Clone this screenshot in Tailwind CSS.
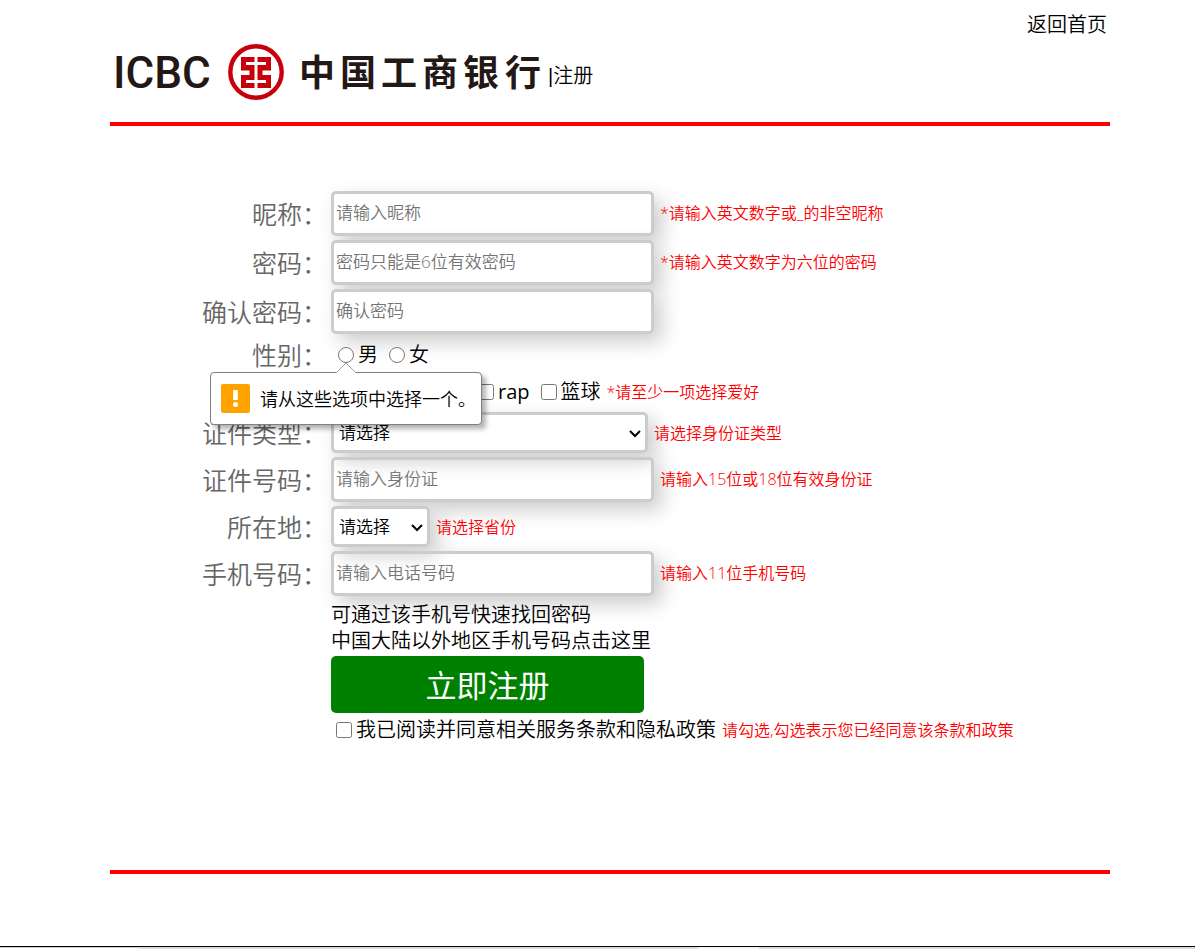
<!DOCTYPE html>
<html lang="zh-CN">
<head>
<meta charset="utf-8">
<meta name="viewport" content="width=device-width, initial-scale=1">
<title>注册</title>
<script src="https://cdn.jsdelivr.net/npm/@tailwindcss/browser@4"></script>
</head>
<body class="flex min-h-screen flex-col bg-white font-['Open_Sans','Noto_Sans_CJK_SC',sans-serif] text-xl leading-[26px] font-[350] text-black">
<div class="pr-[85px] pl-[110px]">
  <header class="border-b-4 border-[#ff0000] pb-5">
    <div class="flex justify-end pt-3 pr-[3px]"><a href="#">返回首页</a></div>
    <div class="flex items-center pt-[6px] pl-1">
      <svg class="h-[58px] w-[434px]" viewBox="0 0 434 58" role="img" aria-label="ICBC 中国工商银行">
        <text x="-1" y="44" font-family="Roboto" font-weight="500" font-size="44" fill="#231815">ICBC</text>
        <g transform="translate(114 0)">
          <circle cx="28" cy="28" r="25.700" fill="none" stroke="#c7000b" stroke-width="4.400"/>
          <path fill="#c7000b" d="M13 13h13.500v5H18v3h8.500v15H18v3h8.500v5H13V31h8.500v-4.500H13zM43 13H29.500v5H38v3h-8.500v15H38v3h-8.500v5H43V31h-8.500v-4.500H43z"/>
        </g>
        <text x="185 226 267 308 349 391" y="42" font-family="Noto Sans CJK SC" font-weight="700" font-size="36" fill="#231815">中国工商银行</text>
      </svg>
      <h1 class="pt-[6px] font-['Liberation_Sans','Noto_Sans_CJK_SC',sans-serif] font-[350]">|注册</h1>
    </div>
  </header>

  <main class="border-b-4 border-[#ff0000] pt-[65px] pb-[127px]">
    <form class="grid grid-cols-[217px_1fr] items-center gap-1">
      <label for="nick" class="text-right text-[25px] leading-8 text-[#666]">昵称：</label>
      <div class="flex items-center gap-[6px]">
        <input id="nick" type="text" placeholder="请输入昵称" class="h-[45px] w-[323px] rounded-[5px] border-[3px] border-[#ccc] bg-white px-[2px] pb-[2px] text-[17px] shadow-[8px_8px_20px_#ccc] placeholder:text-[#757575]">
        <span class="relative pb-[2px] text-base text-[#ff0000]">*请输入英文数字或_的非空昵称</span>
      </div>

      <label for="pwd" class="text-right text-[25px] leading-8 text-[#666]">密码：</label>
      <div class="flex items-center gap-[6px]">
        <input id="pwd" type="password" placeholder="密码只能是6位有效密码" class="h-[45px] w-[323px] rounded-[5px] border-[3px] border-[#ccc] bg-white px-[2px] pb-[2px] text-[17px] shadow-[8px_8px_20px_#ccc] placeholder:text-[#757575]">
        <span class="relative pb-[2px] text-base text-[#ff0000]">*请输入英文数字为六位的密码</span>
      </div>

      <label for="pwd2" class="text-right text-[25px] leading-8 text-[#666]">确认密码：</label>
      <div class="flex items-center">
        <input id="pwd2" type="password" placeholder="确认密码" class="h-[45px] w-[323px] rounded-[5px] border-[3px] border-[#ccc] bg-white px-[2px] pb-[2px] text-[17px] shadow-[8px_8px_20px_#ccc] placeholder:text-[#757575]">
      </div>

      <span id="sex" class="text-right text-[25px] leading-8 text-[#666]">性别：</span>
      <div role="radiogroup" aria-labelledby="sex" class="relative flex h-[33px] items-center gap-[11px] pl-[7px]">
        <label class="flex items-center gap-1"><input type="radio" name="sex" class="size-4">男</label>
        <label class="flex items-center gap-1"><input type="radio" name="sex" class="size-4">女</label>
        <!-- Validation bubble hanging below the first radio -->
        <div role="alert" class="absolute top-[34px] left-[-121px] z-10 flex h-[53px] w-[272px] items-center gap-[10px] rounded-[4px] border border-[#808080] bg-white pl-[10px] text-lg shadow-[4px_4px_5px_rgba(0,0,0,0.3)]">
          <svg class="absolute -top-[11px] left-[124px] h-[12px] w-[22px]" viewBox="0 0 22 12"><path d="M1 12V11L11 1L21 11V12z" fill="#fff"/><path d="M1 11L11 1L21 11" fill="none" stroke="#a0a0a0"/></svg>
          <svg class="size-[29px]" viewBox="0 0 29 29"><rect width="29" height="29" rx="2" fill="#ffa300"/><path d="M12.200 6h4.600v10h-4.600z" fill="#fff"/><circle cx="14.500" cy="20.500" r="2.500" fill="#fff"/></svg>
          <span class="whitespace-nowrap">请从这些选项中选择一个。</span>
        </div>
      </div>

      <div role="group" class="col-start-2 flex h-[33px] items-center gap-[11px] pl-[147px]">
        <label class="flex items-center gap-1 font-normal"><input type="checkbox" class="size-4">rap</label>
        <div class="flex items-center gap-[6px]">
          <label class="flex items-center gap-1"><input type="checkbox" class="size-4">篮球</label>
          <span class="relative text-base text-[#ff0000]">*请至少一项选择爱好</span>
        </div>
      </div>

      <label for="idtype" class="text-right text-[25px] leading-8 text-[#666]">证件类型：</label>
      <div class="flex items-center gap-[6px]">
        <div class="relative">
          <select id="idtype" class="block h-[41px] w-[317px] appearance-none rounded-[5px] border-[3px] border-[#ccc] bg-white pl-[5px] text-[17px] shadow-[8px_8px_20px_#ccc]"><option>请选择</option></select>
          <svg class="pointer-events-none absolute top-[18px] right-[7px] h-2 w-3" viewBox="0 0 12 8" fill="none" stroke="#000" stroke-width="2"><path d="M1 1L6 6L11 1"/></svg>
        </div>
        <span class="relative text-base text-[#ff0000]">请选择身份证类型</span>
      </div>

      <label for="idno" class="text-right text-[25px] leading-8 text-[#666]">证件号码：</label>
      <div class="flex items-center gap-[6px]">
        <input id="idno" type="text" placeholder="请输入身份证" class="h-[45px] w-[323px] rounded-[5px] border-[3px] border-[#ccc] bg-white px-[2px] pb-[2px] text-[17px] shadow-[8px_8px_20px_#ccc] placeholder:text-[#757575]">
        <span class="relative pb-[2px] text-base text-[#ff0000]">请输入15位或18位有效身份证</span>
      </div>

      <label for="place" class="text-right text-[25px] leading-8 text-[#666]">所在地：</label>
      <div class="flex items-center gap-[6px]">
        <div class="relative">
          <select id="place" class="block h-[41px] w-[99px] appearance-none rounded-[5px] border-[3px] border-[#ccc] bg-white pl-[5px] text-[17px] shadow-[8px_8px_20px_#ccc]"><option>请选择</option></select>
          <svg class="pointer-events-none absolute top-[18px] right-[7px] h-2 w-3" viewBox="0 0 12 8" fill="none" stroke="#000" stroke-width="2"><path d="M1 1L6 6L11 1"/></svg>
        </div>
        <span class="relative text-base text-[#ff0000]">请选择省份</span>
      </div>

      <label for="tel" class="text-right text-[25px] leading-8 text-[#666]">手机号码：</label>
      <div class="flex items-center gap-[6px]">
        <input id="tel" type="tel" placeholder="请输入电话号码" class="h-[45px] w-[323px] rounded-[5px] border-[3px] border-[#ccc] bg-white px-[2px] pb-[2px] text-[17px] shadow-[8px_8px_20px_#ccc] placeholder:text-[#757575]">
        <span class="relative pb-[2px] text-base text-[#ff0000]">请输入11位手机号码</span>
      </div>

      <div class="relative col-start-2 -mb-[2px] pt-[2px]">
        <p>可通过该手机号快速找回密码</p>
        <p>中国大陆以外地区手机号码点击<a href="#">这里</a></p>
      </div>
      <button type="submit" class="col-start-2 h-[57px] w-[313px] rounded-[5px] bg-[#008000] text-[31px] font-normal text-white">立即注册</button>
      <div class="col-start-2 flex items-center gap-[6px] pl-[5px]">
        <label class="flex items-center gap-1"><input type="checkbox" class="size-4">我已阅读并同意相关服务条款和隐私政策</label>
        <span class="text-base text-[#ff0000]">请勾选,勾选表示您已经同意该条款和政策</span>
      </div>
    </form>
  </main>
</div>
<footer class="mt-auto flex h-[3px] border-t border-black bg-[#ddd]">
  <div class="w-[139px] border-t border-[#ccc] bg-white"></div>
  <div class="ml-[559px] w-[61px] bg-[#f5f5f5]"></div>
</footer>
</body>
</html>
